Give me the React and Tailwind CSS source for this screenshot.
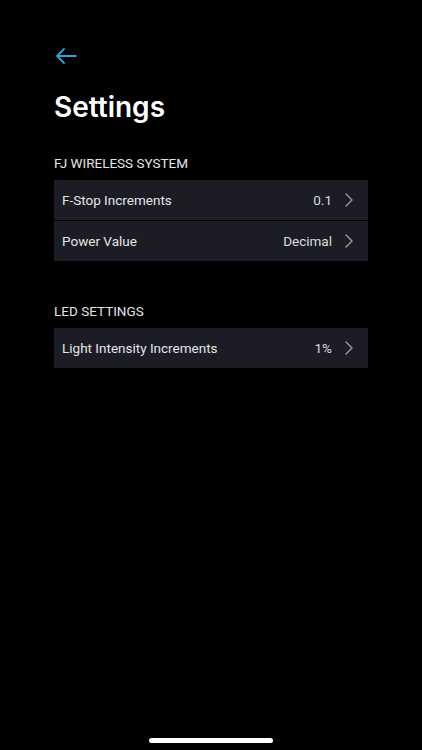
import React from 'react';

const Chevron = () => (
  <svg width="10" height="16" viewBox="0 0 10 16" fill="none" className="ml-[12px]">
    <path d="M2 2l6 6-6 6" stroke="#9b9ba1" strokeWidth="1.4" strokeLinecap="round" strokeLinejoin="round" />
  </svg>
);

const Row = ({ label, value }) => (
  <div className="flex items-center h-[40px] pl-[8px] pr-[14px] bg-[#1c1d24]">
    <span className="flex-1 text-[13.5px] text-[#e4e4e6]">{label}</span>
    <span className="text-[13.5px] text-[#dcdcde]">{value}</span>
    <Chevron />
  </div>
);

const Section = ({ title, rows }) => (
  <div>
    <h2 className="text-[13.5px] text-[#e4e4e6] leading-[18px] mb-[8px]">{title}</h2>
    <div className="flex flex-col gap-[1px] bg-black">
      {rows.map((r) => (
        <Row key={r.label} label={r.label} value={r.value} />
      ))}
    </div>
  </div>
);

export default function App() {
  return (
    <div
      className="relative w-[422px] h-[750px] bg-black overflow-hidden"
      style={{ fontFamily: 'Roboto, "Noto Sans", sans-serif' }}
    >
      <div className="px-[54px] pt-[46px]">
        <button className="block w-[24px] h-[20px]">
          <svg width="24" height="20" viewBox="0 0 24 20" fill="none">
            <path d="M22 10H3M10 3L3 10l7 7" stroke="#2aa2dc" strokeWidth="1.8" strokeLinecap="round" strokeLinejoin="round" />
          </svg>
        </button>
        <h1
          className="mt-[24px] text-[28px] font-semibold text-white leading-[34px]"
          style={{ fontFamily: 'Inter, sans-serif' }}
        >
          Settings
        </h1>
        <div className="mt-[30px]">
          <Section
            title="FJ WIRELESS SYSTEM"
            rows={[
              { label: 'F-Stop Increments', value: '0.1' },
              { label: 'Power Value', value: 'Decimal' },
            ]}
          />
        </div>
        <div className="mt-[41px]">
          <Section title="LED SETTINGS" rows={[{ label: 'Light Intensity Increments', value: '1%' }]} />
        </div>
      </div>
      <div className="absolute bottom-[7px] left-[149px] w-[124px] h-[5px] rounded-full bg-white" />
    </div>
  );
}
